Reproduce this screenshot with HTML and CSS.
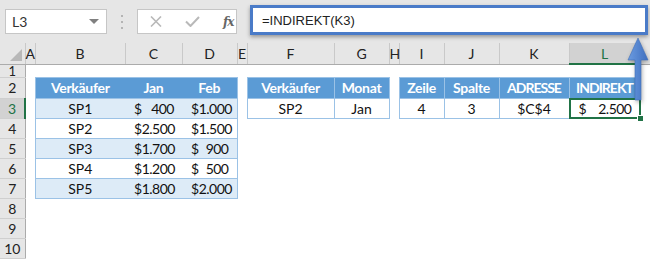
FILE: index.html
```html
<!DOCTYPE html>
<html>
<head>
  <link rel="stylesheet" href="styles.css">
</head>
<body>
  <div class="topbar">
    <div class="name-box">
      <span>L3</span>
      <span class="caret"></span>
    </div>
    <svg class="grip" width="4" height="18" viewBox="0 0 4 18">
      <rect x="1" y="2" width="2" height="2" fill="#b4b4b4"/>
      <rect x="1" y="8" width="2" height="2" fill="#b4b4b4"/>
      <rect x="1" y="14" width="2" height="2" fill="#b4b4b4"/>
    </svg>
    <div class="fx-box">
      <svg width="12" height="11" viewBox="0 0 12 11">
        <path d="M1 0.5 L11 10.5 M11 0.5 L1 10.5" stroke="#b9b9b9" stroke-width="1.6" fill="none"/>
      </svg>
      <svg width="15" height="11" viewBox="0 0 15 11">
        <path d="M1 5.5 L5.5 10 L14 1" stroke="#b9b9b9" stroke-width="2" fill="none"/>
      </svg>
      <span class="fx">fx</span>
    </div>
    <div class="formula">=INDIREKT(K3)</div>
  </div>

  <table class="sheet">
    <colgroup>
      <col style="width:25px"><col style="width:10px"><col style="width:90px"><col style="width:57px">
      <col style="width:55px"><col style="width:10px"><col style="width:87px"><col style="width:55px">
      <col style="width:10px"><col style="width:45px"><col style="width:55px"><col style="width:70px">
      <col style="width:71px"><col style="width:11px">
    </colgroup>
    <thead>
      <tr class="col-heads">
        <th class="corner"><span class="corner-tri"></span></th>
        <th>A</th><th>B</th><th>C</th><th>D</th><th>E</th><th>F</th><th>G</th>
        <th>H</th><th>I</th><th>J</th><th>K</th><th class="active">L</th><th></th>
      </tr>
    </thead>
    <tbody>
      <tr class="row-short">
        <td class="rh">1</td><td></td><td></td><td></td><td></td><td></td><td></td><td></td>
        <td></td><td></td><td></td><td></td><td></td><td></td>
      </tr>
      <tr class="row-head">
        <td class="rh">2</td><td></td>
        <td class="t hd first">Verkäufer</td><td class="t hd">Jan</td><td class="t hd last">Feb</td>
        <td></td>
        <td class="t hd box">Verkäufer</td><td class="t hd box">Monat</td>
        <td></td>
        <td class="t hd box">Zeile</td><td class="t hd box">Spalte</td>
        <td class="t hd box caps">ADRESSE</td><td class="t hd box caps">INDIREKT</td>
        <td></td>
      </tr>
      <tr>
        <td class="rh active">3</td><td></td>
        <td class="t band first">SP1</td>
        <td class="t band"><div class="acct"><span>$</span><span>400</span></div></td>
        <td class="t band last"><div class="acct"><span>$</span><span>1.000</span></div></td>
        <td></td>
        <td class="t box">SP2</td><td class="t box">Jan</td>
        <td></td>
        <td class="t box">4</td><td class="t box">3</td><td class="t box">$C$4</td>
        <td class="t box selected"><div class="acct"><span>$</span><span>2.500</span></div><span class="handle"></span></td>
        <td></td>
      </tr>
      <tr>
        <td class="rh">4</td><td></td>
        <td class="t first">SP2</td>
        <td class="t"><div class="acct"><span>$</span><span>2.500</span></div></td>
        <td class="t last"><div class="acct"><span>$</span><span>1.500</span></div></td>
        <td></td><td></td><td></td><td></td><td></td><td></td><td></td><td></td><td></td>
      </tr>
      <tr>
        <td class="rh">5</td><td></td>
        <td class="t band first">SP3</td>
        <td class="t band"><div class="acct"><span>$</span><span>1.700</span></div></td>
        <td class="t band last"><div class="acct"><span>$</span><span>900</span></div></td>
        <td></td><td></td><td></td><td></td><td></td><td></td><td></td><td></td><td></td>
      </tr>
      <tr>
        <td class="rh">6</td><td></td>
        <td class="t first">SP4</td>
        <td class="t"><div class="acct"><span>$</span><span>1.200</span></div></td>
        <td class="t last"><div class="acct"><span>$</span><span>500</span></div></td>
        <td></td><td></td><td></td><td></td><td></td><td></td><td></td><td></td><td></td>
      </tr>
      <tr>
        <td class="rh">7</td><td></td>
        <td class="t band first">SP5</td>
        <td class="t band"><div class="acct"><span>$</span><span>1.800</span></div></td>
        <td class="t band last"><div class="acct"><span>$</span><span>2.000</span></div></td>
        <td></td><td></td><td></td><td></td><td></td><td></td><td></td><td></td><td></td>
      </tr>
      <tr>
        <td class="rh">8</td><td></td><td></td><td></td><td></td><td></td><td></td><td></td>
        <td></td><td></td><td></td><td></td><td></td><td></td>
      </tr>
      <tr>
        <td class="rh">9</td><td></td><td></td><td></td><td></td><td></td><td></td><td></td>
        <td></td><td></td><td></td><td></td><td></td><td></td>
      </tr>
      <tr>
        <td class="rh">10</td><td></td><td></td><td></td><td></td><td></td><td></td><td></td>
        <td></td><td></td><td></td><td></td><td></td><td></td>
      </tr>
    </tbody>
  </table>

  <!-- arrow pointing from the result cell up to the formula -->
  <svg class="arrow" width="26" height="70" viewBox="0 0 26 70">
    <defs>
      <linearGradient id="arrowFill" x1="0" x2="1" y1="0" y2="0">
        <stop offset="0" stop-color="#6b9be0"/>
        <stop offset="1" stop-color="#3f6fbf"/>
      </linearGradient>
    </defs>
    <path d="M13 4 L23 26 L16 26 L16 66 L10 66 L10 26 L3 26 Z" fill="url(#arrowFill)" stroke="#4270bb" stroke-width="0.6"/>
  </svg>
</body>
</html>
```

FILE: styles.css
```css
body {
  margin: 0;
  width: 650px;
  height: 259px;
  overflow: hidden;
  background: white;
  font-family: Lato, "Liberation Sans", sans-serif;
  position: relative;
}

.topbar {
  display: flex;
  align-items: flex-start;
  height: 43px;
  padding: 9px 0 0 5px;
  box-sizing: border-box;
  background: #e6e6e6;
}

.name-box {
  width: 102px;
  height: 25px;
  box-sizing: border-box;
  background: white;
  border: 1px solid #c6c6c6;
  display: flex;
  align-items: center;
  justify-content: space-between;
  padding: 0 7px 0 6px;
  font-size: 14px;
  color: #333;
}

.caret {
  width: 0;
  height: 0;
  border-left: 5px solid transparent;
  border-right: 5px solid transparent;
  border-top: 5px solid #808080;
}

.grip {
  margin: 4px 0 0 13px;
}

.fx-box {
  margin-left: 13px;
  width: 100px;
  height: 25px;
  box-sizing: border-box;
  background: white;
  border: 1px solid #c6c6c6;
  display: flex;
  align-items: center;
  gap: 23px;
  padding-left: 12px;
}

.fx {
  font-family: "DejaVu Serif", serif;
  font-style: italic;
  font-weight: bold;
  font-size: 12px;
  color: #666;
  letter-spacing: -1px;
}

.formula {
  margin: -4px 0 0 13px;
  width: 398px;
  height: 30px;
  box-sizing: border-box;
  background: white;
  border: 3px solid #4a7bc8;
  box-shadow: 0 2px 4px rgba(0, 0, 0, 0.35);
  padding-left: 9px;
  display: flex;
  align-items: center;
  font-family: "Liberation Sans", sans-serif;
  font-size: 13px;
  color: #222;
}

.sheet {
  table-layout: fixed;
  width: 651px;
  border-collapse: collapse;
  font-size: 14px;
  color: #111;
}

.sheet td,
.sheet th {
  padding: 0;
  height: 20px;
  box-sizing: border-box;
  white-space: nowrap;
}

.col-heads th {
  height: 21px;
  background: #e6e6e6;
  font-weight: normal;
  font-size: 14px;
  color: #222;
  border-right: 1px solid #c9c9c9;
  border-bottom: 1px solid #ababab;
}

.col-heads th.active {
  background: #d2d2d2;
  color: #217346;
  border-bottom: 2px solid #217346;
}

.corner {
  position: relative;
}

.corner-tri {
  position: absolute;
  right: 3px;
  bottom: 3px;
  width: 0;
  height: 0;
  border-left: 12px solid transparent;
  border-bottom: 12px solid #b8b8b8;
}

.row-short td {
  height: 13px;
  font-size: 13px;
  line-height: 12px;
}

.row-head td {
  height: 21px;
}

.rh {
  background: #e6e6e6;
  text-align: center;
  font-size: 14px;
  color: #222;
  border-right: 1px solid #ababab;
  border-bottom: 1px solid #cfcfcf;
}

.rh.active {
  background: #d2d2d2;
  color: #217346;
  border-right: 2px solid #217346;
}

.t {
  text-align: center;
  border-top: 1px solid #9bc2e6;
  border-bottom: 1px solid #9bc2e6;
}

.t.first {
  border-left: 1px solid #9bc2e6;
}

.t.last,
.t.box {
  border-right: 1px solid #9bc2e6;
}

.t.box {
  border-left: 1px solid #9bc2e6;
}

.hd {
  background: #5b9bd5;
  color: white;
  font-weight: 700;
  letter-spacing: -0.3px;
}

.hd.caps {
  letter-spacing: -1px;
}

.band {
  background: #ddebf7;
}

.acct {
  display: flex;
  justify-content: space-between;
  padding: 0 8px 0 9px;
  letter-spacing: -0.5px;
}

.selected {
  position: relative;
}

.selected::after {
  content: "";
  position: absolute;
  left: -1px;
  top: -1px;
  right: -1px;
  bottom: -1px;
  border: 2px solid #217346;
}

.handle {
  position: absolute;
  right: -4px;
  bottom: -4px;
  width: 5px;
  height: 5px;
  background: #217346;
  border: 1px solid white;
  z-index: 1;
}

.arrow {
  position: absolute;
  left: 625px;
  top: 34px;
  filter: drop-shadow(1px 2px 2px rgba(0, 0, 0, 0.3));
}
```
